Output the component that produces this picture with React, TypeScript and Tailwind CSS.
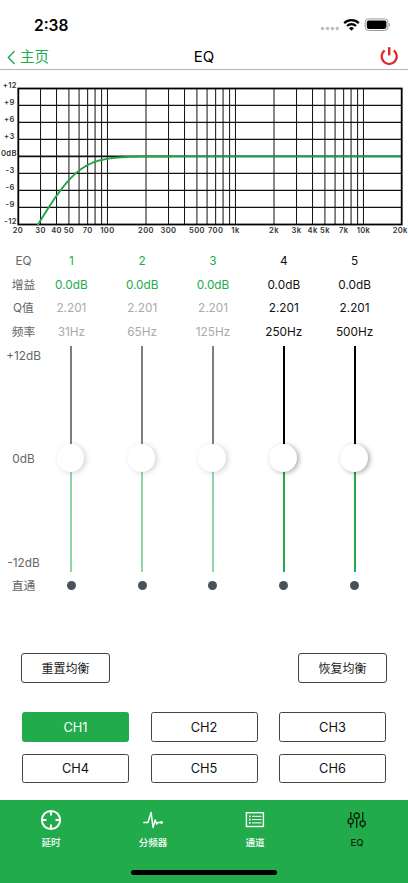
import React from 'react';
import clsx from 'clsx';

const BANDS = [
  { id: 1, gain: '0.0dB', q: '2.201', freq: '31Hz', locked: true },
  { id: 2, gain: '0.0dB', q: '2.201', freq: '65Hz', locked: true },
  { id: 3, gain: '0.0dB', q: '2.201', freq: '125Hz', locked: true },
  { id: 4, gain: '0.0dB', q: '2.201', freq: '250Hz', locked: false },
  { id: 5, gain: '0.0dB', q: '2.201', freq: '500Hz', locked: false },
];

const CHANNELS = ['CH1', 'CH2', 'CH3', 'CH4', 'CH5', 'CH6'];

const GAIN_LABELS = ['+12', '+9', '+6', '+3', '0dB', '-3', '-6', '-9', '-12'];

const FREQ_LABELS: [number, string][] = [
  [20, '20'], [30, '30'], [40, '40'], [50, '50'], [70, '70'], [100, '100'],
  [200, '200'], [300, '300'], [500, '500'], [700, '700'], [1000, '1k'],
  [2000, '2k'], [3000, '3k'], [4000, '4k'], [5000, '5k'], [7000, '7k'],
  [10000, '10k'], [20000, '20k'],
];

const GRID_FREQS = [
  30, 40, 50, 60, 70, 80, 90, 100,
  200, 300, 400, 500, 600, 700, 800, 900, 1000,
  2000, 3000, 4000, 5000, 6000, 7000, 8000, 9000, 10000,
];

const freqX = (f: number) => 18 + 128 * Math.log10(f / 20);
const gainY = (db: number) => 80.4 - db * (17 / 3);

// Second order high-pass, 12 dB per octave
const curvePoints = () => {
  const points: string[] = [];
  for (let x = 37.8; x <= 401; x += 1.5) {
    const f = 20 * Math.pow(10, (x - 18) / 128);
    const db = -10 * Math.log10(1 + Math.pow(56.4 / f, 4));
    points.push(`${x.toFixed(1)},${gainY(db).toFixed(2)}`);
  }
  return points.join(' ');
};

const StatusBar: React.FC = () => (
  <div className="flex h-[43px] items-start justify-between pl-[34px] pr-[17px] pt-[15px]">
    <span className="pt-px text-[15.5px] leading-5 font-semibold text-black">2:38</span>
    <div className="flex items-center pt-0.5">
      <svg width="19" height="16" viewBox="0 0 19 16" fill="#bdbdbd">
        <circle cx="2.5" cy="11.5" r="1.7" />
        <circle cx="7.5" cy="11.5" r="1.7" />
        <circle cx="12.4" cy="11.5" r="1.7" />
        <circle cx="17.3" cy="11.5" r="1.7" />
      </svg>
      <svg className="ml-1" width="17" height="16" viewBox="0 0 17 16" fill="none" stroke="#000" strokeWidth="2.2">
        <path d="M1.2 6.1a10.4 10.4 0 0 1 14.6 0" />
        <path d="M4 9a6.4 6.4 0 0 1 9 0" />
        <path d="M8.5 13.8 6 11.3a3.6 3.6 0 0 1 5 0z" fill="#000" stroke="none" />
      </svg>
      <svg className="ml-1" width="27" height="16" viewBox="0 0 27 16">
        <rect x="1.2" y="1.9" width="22.8" height="11.6" rx="3.4" fill="none" stroke="#999" />
        <rect x="2.8" y="3.5" width="19.6" height="8.4" rx="1.8" fill="#000" />
        <path d="M25 5.8v4c1.3-.5 1.3-3.5 0-4z" fill="#999" />
      </svg>
    </div>
  </div>
);

const Header: React.FC = () => (
  <div className="grid h-[27px] grid-cols-3 items-center border-b border-[#b5b5b5] px-[7px]">
    <div className="flex items-center pt-0.5 text-[#21ab4b]">
      <svg width="9" height="15" viewBox="0 0 9 15" fill="none" stroke="currentColor" strokeWidth="1.4">
        <path d="M7.6 1 1.3 7.5l6.3 6.5" />
      </svg>
      <span className="ml-1 text-[14.5px] leading-5">主页</span>
    </div>
    <div className="pt-0.5 text-center text-[15px] leading-5 text-black">EQ</div>
    <svg className="mt-px mr-[-1.5px] justify-self-end" width="24" height="22" viewBox="0 0 24 22" fill="none" stroke="#e02828" strokeWidth="2.3">
      <path d="M6.6 4.4a7.6 7.6 0 1 0 9.2 0" />
      <path d="M11.2 1.2v8.2" strokeWidth="2.5" />
    </svg>
  </div>
);

const ResponseChart: React.FC = () => (
  <svg className="block h-[170px] w-full" viewBox="0 0 408 170">
    <g stroke="#111" strokeWidth="1">
      {GRID_FREQS.map((f) => (
        <line key={f} x1={freqX(f)} x2={freqX(f)} y1="12.5" y2="148" />
      ))}
      {[9, 6, 3, 0, -3, -6, -9].map((db) => (
        <line key={db} x1="18" x2="402" y1={gainY(db)} y2={gainY(db)} strokeWidth={db === 0 ? 1.6 : 1.1} />
      ))}
    </g>
    <rect x="18.3" y="12.5" width="383.4" height="136" fill="none" stroke="#000" strokeWidth="1.8" />
    <polyline points={curvePoints()} fill="none" stroke="#21a54a" strokeWidth="1.9" />
    <g fontSize="7.6" fontWeight="600" fill="#333" letterSpacing="0.35">
      {GAIN_LABELS.map((label, i) => (
        <text key={label} x={i === 0 || i === 4 || i === 8 ? 16.8 : 14.6} y={11.6 + i * 17} textAnchor="end">{label}</text>
      ))}
      {FREQ_LABELS.map(([f, label]) => (
        <text key={label} x={f === 20000 ? 407.8 : freqX(f)} y="156.6" textAnchor={f === 20000 ? 'end' : 'middle'}>{label}</text>
      ))}
    </g>
  </svg>
);

const Slider: React.FC<{ locked: boolean }> = ({ locked }) => (
  <div className={clsx('relative mt-[1px] h-[226px] w-[2px]', locked && 'opacity-50')}>
    <div className="h-[113px] bg-black" />
    <div className="h-[113px] bg-[#21ab4b]" />
    <div className="absolute left-[-13.5px] top-[98.5px] size-[27.5px] rounded-full bg-white shadow-[2px_1px_5px_rgba(0,0,0,0.33)]" />
  </div>
);

const Equalizer: React.FC = () => (
  <div className="flex h-[403px] pt-[11.3px] text-[11.8px] leading-[23.6px]">
    <div className="-mr-[11px] flex w-[47px] shrink-0 flex-col text-center text-[#666]">
      <span>EQ</span>
      <span>增益</span>
      <span>Q值</span>
      <span>频率</span>
      <span>+12dB</span>
      <span className="mt-[80px]">0dB</span>
      <span className="mt-[80px]">-12dB</span>
      <span>直通</span>
    </div>
    {BANDS.map((band) => (
      <div key={band.id} className={clsx('flex w-[70.8px] shrink-0 flex-col items-center', band.locked ? 'text-[#aaa]' : 'text-[#111]')}>
        <span className={clsx(band.locked && 'text-[#21ab4b]')}>{band.id}</span>
        <span className={clsx(band.locked && 'text-[#21ab4b]')}>{band.gain}</span>
        <span>{band.q}</span>
        <span>{band.freq}</span>
        <Slider locked={band.locked} />
        <span className="mt-[9px] size-[9px] rounded-full bg-[#49525b]" />
      </div>
    ))}
  </div>
);

const TabBar: React.FC = () => (
  <div className="h-[83px] bg-[#21ab4b] text-[9.5px] font-medium text-white">
    <div className="grid grid-cols-4 pt-2">
      <div className="flex flex-col items-center">
        <svg width="24" height="24" viewBox="0 0 24 24" fill="none" stroke="currentColor" strokeWidth="2">
          <circle cx="12" cy="12" r="9.1" />
          <path d="M12 3v4.5M12 16.5V21M3 12h4.5M16.5 12H21" />
        </svg>
        <span className="mt-[3.5px] leading-[14px]">延时</span>
      </div>
      <div className="flex flex-col items-center">
        <svg width="24" height="24" viewBox="0 0 24 24" fill="none" stroke="currentColor" strokeWidth="1.5" strokeLinejoin="round">
          <path d="M2.3 14.5h4.6l3.2-10 1.9 15 2.2-7.5 1.5 4 1.3-1.5h3.5" />
          <circle cx="20.5" cy="14.5" r="1.4" fill="currentColor" stroke="none" />
        </svg>
        <span className="mt-[3.5px] leading-[14px]">分频器</span>
      </div>
      <div className="flex flex-col items-center">
        <svg width="24" height="24" viewBox="0 0 24 24" fill="none" stroke="currentColor" strokeWidth="1.4">
          <rect x="3.4" y="4.7" width="17" height="13.8" />
          <path d="M6 8.3h1.6M6 11.6h1.6M6 14.9h1.6" strokeWidth="1.7" />
          <path d="M9 8.3h9.5M9 11.6h9.5M9 14.9h9.5" strokeWidth="1" />
        </svg>
        <span className="mt-[3.5px] leading-[14px]">通道</span>
      </div>
      <div className="flex flex-col items-center text-[#0b2a12]">
        <svg width="24" height="24" viewBox="0 0 24 24" fill="none" stroke="currentColor" strokeWidth="1.4">
          <path d="M5.7 4v6.5M5.7 15.8V20M11.7 4v1.2M11.7 10.3V20M17.7 4v9M17.7 18.2V20" />
          <circle cx="5.7" cy="13.2" r="2.6" />
          <circle cx="11.7" cy="7.7" r="2.6" />
          <circle cx="17.7" cy="15.6" r="2.6" />
        </svg>
        <span className="mt-[3.5px] leading-[14px]">EQ</span>
      </div>
    </div>
    <div className="mx-auto mt-[20.5px] h-[5px] w-[146px] rounded-full bg-black" />
  </div>
);

const App: React.FC = () => {
  return (
    <div className="flex h-[883px] w-[408px] flex-col overflow-hidden bg-white font-['Inter','Noto_Sans_CJK_SC',sans-serif]">
      <StatusBar />
      <Header />
      <div className="pt-1.5">
        <ResponseChart />
      </div>
      <div className="-mt-[7px] shrink-0">
        <Equalizer />
      </div>
      <div className="mt-[11px] flex shrink-0 justify-between px-[21px] text-[12px] text-[#222]">
        <button className="h-[30px] w-[89px] rounded-[3px] border border-[#444] pt-px">重置均衡</button>
        <button className="h-[30px] w-[89px] rounded-[3px] border border-[#444] pt-px">恢复均衡</button>
      </div>
      <div className="mt-[29px] grid shrink-0 grid-cols-3 gap-x-[21.5px] gap-y-3 px-[22px] text-[12.8px] text-[#111]">
        {CHANNELS.map((channel, index) => (
          <button
            key={channel}
            className={clsx('h-[29.5px] rounded-[2.5px] border pt-px', index === 0 ? 'border-[#21ab4b] bg-[#21ab4b] text-white' : 'border-[#444]')}
          >
            {channel}
          </button>
        ))}
      </div>
      <div className="mt-auto">
        <TabBar />
      </div>
    </div>
  );
};

export default App;
